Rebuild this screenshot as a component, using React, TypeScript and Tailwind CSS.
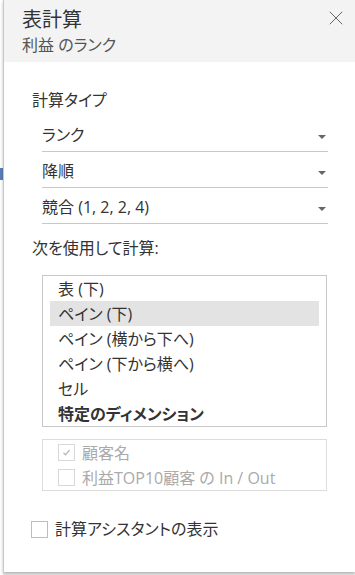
import React from 'react';
import { X } from 'lucide-react';

const Dropdown: React.FC<{ label: string }> = ({ label }) => (
  <div className="h-[36px] flex items-end justify-between pb-[6px] border-b border-[#c8c8c8] text-[16px] text-[#333] leading-[20px]">
    <span>{label}</span>
    <span className="mr-[2px] mb-[6px] w-0 h-0 border-l-[4px] border-r-[4px] border-t-[4px] border-l-transparent border-r-transparent border-t-[#666]" />
  </div>
);

const Check: React.FC<{ checked?: boolean; disabled?: boolean }> = ({ checked, disabled }) => (
  <span className={`w-[17px] h-[17px] shrink-0 border bg-white flex items-center justify-center ${disabled ? 'border-[#d8d8d8]' : 'border-[#bdbdbd]'}`}>
    {checked && (
      <svg width="11" height="11" viewBox="0 0 11 11">
        <path d="M2.5 5.8 L4.5 7.8 L8.5 3" fill="none" stroke="#b8b8b8" strokeWidth="1.3" />
      </svg>
    )}
  </span>
);

const items = ['表 (下)', 'ペイン (下)', 'ペイン (横から下へ)', 'ペイン (下から横へ)', 'セル', '特定のディメンション'];

const App: React.FC = () => {
  return (
    <div className="w-[355px] h-[575px] flex bg-[#f0f0f0] overflow-hidden font-['Open_Sans','Noto_Sans_CJK_JP',sans-serif] [font-feature-settings:'palt']">
      <div className="w-[3px] flex flex-col bg-white shrink-0">
        <div className="h-[168px]" />
        <div className="h-[12px] bg-[#5b7fb5]" />
      </div>
      <div className="flex-1 h-[572px] bg-white border-l border-[#c8c8c8] shadow-[0_2px_3px_rgba(0,0,0,0.25)] flex flex-col">
        <header className="h-[62px] bg-[#f3f3f3] pl-[18px] pr-[7px] flex justify-between">
          <div className="pt-[7px]">
            <div className="text-[20px] leading-[26px] text-[#333]">表計算</div>
            <div className="text-[16px] leading-[20px] text-[#555] mt-[2px]">利益 のランク</div>
          </div>
          <X size={24} strokeWidth={1} className="text-[#666] mt-[6px]" />
        </header>

        <div className="pl-[28px] pr-[24px]">
          <div className="mt-[28px] text-[16px] leading-[20px] text-[#333]">計算タイプ</div>
          <div className="mt-[6px] ml-[10px] mr-[3px]">
            <Dropdown label="ランク" />
            <Dropdown label="降順" />
            <Dropdown label="競合 (1, 2, 2, 4)" />
          </div>

          <div className="mt-[14px] text-[16px] leading-[20px] text-[#333]">次を使用して計算:</div>

          <div className="mt-[17px] ml-[10px] mr-[4px] border border-[#c8c8c8] px-[7px]">
            {items.map((it, i) => (
              <div
                key={it}
                className={`h-[25px] pl-[8px] flex items-center text-[16px] text-[#333] ${i === 1 ? 'bg-[#e3e3e3]' : ''} ${i === 5 ? 'font-bold' : ''}`}
              >
                {it}
              </div>
            ))}
          </div>

          <div className="mt-[12px] ml-[10px] mr-[4px] border border-[#dcdcdc] px-[15px]">
            <div className="h-[25px] flex items-center gap-[7px] text-[16px] text-[#aaa]">
              <Check checked disabled />
              <span>顧客名</span>
            </div>
            <div className="h-[25px] flex items-center gap-[7px] text-[16px] text-[#aaa]">
              <Check disabled />
              <span>利益TOP10顧客 の In / Out</span>
            </div>
          </div>

          <div className="mt-[28px] h-[20px] flex items-center gap-[7px] text-[16px] text-[#333] -ml-[1px]">
            <Check />
            <span>計算アシスタントの表示</span>
          </div>
        </div>
      </div>
    </div>
  );
};

export default App;
